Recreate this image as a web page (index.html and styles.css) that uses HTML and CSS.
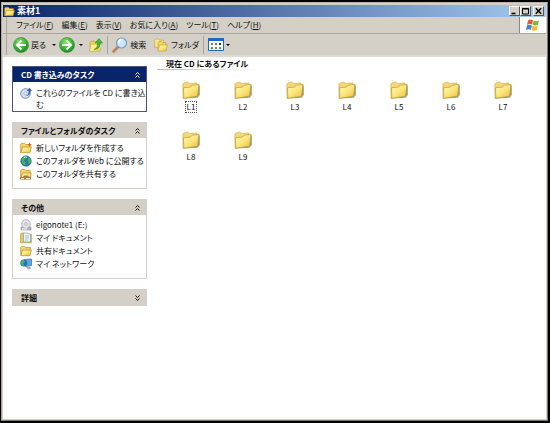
FILE: index.html
```
<!DOCTYPE html>
<html lang="ja">
<head>
<meta charset="utf-8">
<title>素材1</title>
<link rel="stylesheet" href="styles.css">
</head>
<body>
<svg class="defs" aria-hidden="true">
  <defs>
    <linearGradient id="gold" x1="0" y1="0" x2="1" y2="1"><stop offset="0" stop-color="#fffbc0"/><stop offset=".5" stop-color="#fbe67c"/><stop offset="1" stop-color="#e9bd3c"/></linearGradient>
    <radialGradient id="green" cx=".4" cy=".3" r=".75"><stop offset="0" stop-color="#8be06a"/><stop offset=".55" stop-color="#3bb536"/><stop offset="1" stop-color="#1c8420"/></radialGradient>
    <symbol id="folder" viewBox="0 0 18 19">
      <path d="M2 17.500L15.500 16.800 17.800 14V5L17 3.500z" fill="#8b8560" opacity=".8"/>
      <path d="M.8 3.500Q1 2.300 2.200 2l3.300-1 2 1.400 7.500-.4v3L2.500 17.500H1z" fill="#f3d873" stroke="#cfab45" stroke-width=".6"/>
      <path d="M1.500 6.800l7-.8 1.800-1.900 6.700-.6-1.400 11.800L1.800 17.200z" fill="url(#gold)" stroke="#b99836" stroke-width=".7"/>
    </symbol>
    <symbol id="small-folder" viewBox="0 0 12 12">
      <path d="M.7 10.500V2.300l1-.9h3l1.100 1.200h4.500v3" fill="#f4d568" stroke="#b58b23" stroke-width=".7"/>
      <path d="M.8 10.700L2.500 5h8.900l-1.500 5.700z" fill="url(#gold)" stroke="#b58b23" stroke-width=".7"/>
    </symbol>
    <symbol id="chevrons" viewBox="0 0 7 8">
      <path d="M1.500 3.500l2-2 2 2M1.500 6.500l2-2 2 2" fill="none" stroke="currentColor" stroke-width="1"/>
    </symbol>
  </defs>
</svg>
<div class="window">
  <header class="titlebar">
    <svg class="title-icon" viewBox="0 0 12 12"><use href="#small-folder"/></svg>
    <h1>素材1</h1>
    <div class="controls">
      <button aria-label="最小化"><svg viewBox="0 0 9 8"><path d="M1.500 6.500h4" stroke="#000" stroke-width="1.500"/></svg></button>
      <button aria-label="最大化"><svg viewBox="0 0 9 8"><path d="M1.500 1.500h6v5.500h-6zM1.500 2h6" fill="none" stroke="#000"/></svg></button>
      <button class="close" aria-label="閉じる"><svg viewBox="0 0 9 8"><path d="M1.800 1.200l5.400 5.600M7.200 1.200L1.800 6.800" stroke="#000" stroke-width="1.400"/></svg></button>
    </div>
  </header>
  <div class="menurow">
    <nav class="menubar">
      <button>ファイル(<u>F</u>)</button>
      <button>編集(<u>E</u>)</button>
      <button>表示(<u>V</u>)</button>
      <button>お気に入り(<u>A</u>)</button>
      <button>ツール(<u>T</u>)</button>
      <button>ヘルプ(<u>H</u>)</button>
    </nav>
    <div class="brand">
      <svg viewBox="0 0 14 12"><path d="M2 1.500Q4-.2 7 1.200L6.100 5.500Q3.500 4.500 1 5.800z" fill="#e8592b"/><path d="M7.600 1.500q2.400 1.500 5.400 0L12 5.800q-2.500 1.400-5.300 0z" fill="#79b83f"/><path d="M.9 6.500q2.500-1.500 5 0l-1 4.300q-2.300-1.300-4.900.1z" fill="#3f81d4"/><path d="M6.500 6.600q2.500 1.500 5.300.2l-1 4.200q-2.500 1.300-5.200-.1z" fill="#f5bd29"/></svg>
    </div>
  </div>
  <div class="toolbar">
    <button class="back"><svg class="round" viewBox="0 0 16 16"><circle cx="8" cy="8" r="7.500" fill="url(#green)" stroke="#278c29" stroke-width=".6"/><path d="M8.500 3.500L4 8l4.500 4.500M4.500 8H13" fill="none" stroke="#fff" stroke-width="2"/></svg>戻る<i class="caret"></i></button>
    <button class="forward" aria-label="進む"><svg class="round" viewBox="0 0 16 16"><circle cx="8" cy="8" r="7.500" fill="url(#green)" stroke="#278c29" stroke-width=".6"/><path d="M7.500 3.500L12 8l-4.500 4.500M11.500 8H3" fill="none" stroke="#fff" stroke-width="2"/></svg><i class="caret"></i></button>
    <button class="up" aria-label="上へ"><svg class="tool" viewBox="0 0 14 14"><path d="M1 4l1-1h3l1 1h5l1 2-1 7-10 .5z" fill="#efcd58" stroke="#b89230" stroke-width=".6"/><path d="M2.500 7h9.800l-1.500 6L1 13.600z" fill="url(#gold)"/><path d="M5 11.500Q9 10 8.500 5H6L10 .6 13.500 5H11q.5 6-6 6.500z" fill="#41b83a" stroke="#268522" stroke-width=".5"/></svg></button>
    <span class="divider"></span>
    <button class="search"><svg class="lens" viewBox="0 0 16 16"><path d="M1.500 14.500l5-5" stroke="#bd8257" stroke-width="2.600" stroke-linecap="round"/><circle cx="9.500" cy="6" r="5" fill="#c8e8fb" stroke="#7d9bc3" stroke-width="1.200"/><path d="M6.500 6q.2-3 3-3.200" fill="none" stroke="#fff" stroke-width="1.500"/></svg>検索</button>
    <button class="folders"><svg class="tool" viewBox="0 0 14 14"><path d="M.7 9.500V2l1-1h3l1 1.200h3.800V9z" fill="#f8e795" stroke="#c29d34" stroke-width=".6"/><path d="M4 12.500V4.500l1-1h2.500l1 1.200H12v3" fill="#f5d663" stroke="#bf962e" stroke-width=".6"/><path d="M4 13l1.700-6h7.800L12 13z" fill="url(#gold)" stroke="#c29d34" stroke-width=".6"/></svg>フォルダ</button>
    <span class="divider"></span>
    <button class="views" aria-label="表示"><svg class="view-icon" viewBox="0 0 16 13"><path d="M.5.500h15v12H.5z" fill="#fff" stroke="#1e69bf"/><path d="M0 0h16v3H0z" fill="#1e69bf"/><path d="M3 5h2v2H3zM11 9h2v2h-2z" fill="#4b88c7"/><path d="M7 5h2v2H7zM3 9h2v2H3z" fill="#42984b"/><path d="M11 5h2v2h-2z" fill="#222f76"/><path d="M7 9h2v2H7z" fill="#bd6b38"/></svg><i class="caret"></i></button>
  </div>
  <div class="content">
    <aside class="sidebar">
      <section class="panel primary">
        <h2>CD 書き込みのタスク<svg class="chev" viewBox="0 0 7 8"><use href="#chevrons"/></svg></h2>
        <ul>
          <li><svg viewBox="0 0 12 12"><circle cx="5.500" cy="6.500" r="4.800" fill="#d5e0f2" stroke="#788bb5"/><circle cx="5.500" cy="6.500" r="1.500" fill="#fff" stroke="#788bb5" stroke-width=".6"/><path d="M5 9q4-.5 3.600-5H6.700L9.500.8 12 4h-1.500q0 5-5.500 5z" fill="#3561ae"/></svg><a href="#">これらのファイルを CD に書き込<br>む</a></li>
        </ul>
      </section>
      <section class="panel">
        <h2>ファイルとフォルダのタスク<svg class="chev" viewBox="0 0 7 8"><use href="#chevrons"/></svg></h2>
        <ul>
          <li><svg viewBox="0 0 12 12"><use href="#small-folder"/><path d="M9.500.3l.6 1.700 1.700.5-1.700.7-.6 1.600-.7-1.600-1.600-.7 1.600-.5z" fill="#e4572c"/></svg><a href="#">新しいフォルダを作成する</a></li>
          <li><svg viewBox="0 0 12 12"><circle cx="6" cy="6" r="5.300" fill="#2874c4" stroke="#315c82" stroke-width=".5"/><path d="M1.500 4Q3 1 6 1l1 2-2 1-1 2 2 1.500-1 3Q1.500 9 1.500 4zM8.500 2q2.500 1.500 2.300 4.500L9 9 7.500 6z" fill="#42b94b"/><path d="M4 2.500q2-1.500 3 0" stroke="#c9eeee" fill="none"/></svg><a href="#">このフォルダを Web に公開する</a></li>
          <li><svg viewBox="0 0 12 12"><use href="#small-folder"/><path d="M0 9h3l1-1.500h4L9 9h2v2.500H0z" fill="#a87946"/><path d="M1 10.500h3M6 10.500h4" stroke="#fff1ca"/></svg><a href="#">このフォルダを共有する</a></li>
        </ul>
      </section>
      <section class="panel">
        <h2>その他<svg class="chev" viewBox="0 0 7 8"><use href="#chevrons"/></svg></h2>
        <ul>
          <li><svg viewBox="0 0 12 12"><path d="M1 8h10v3H1z" fill="#b6b8bd" stroke="#7c8089" stroke-width=".5"/><circle cx="6" cy="5" r="4.300" fill="#e4e6eb" stroke="#989da8" stroke-width=".7"/><circle cx="6" cy="5" r="1.300" fill="#fff" stroke="#888d98" stroke-width=".6"/><path d="M2 10h5" stroke="#fff"/></svg><a href="#">eigonote1 (E:)</a></li>
          <li><svg viewBox="0 0 12 12"><path d="M.6 10.800V2l1-1h3l1 1.200h5.800v8.600z" fill="#efc84e" stroke="#b58b23" stroke-width=".6"/><path d="M3.500 1h5L10.500 3v7h-7z" fill="#e9f4ff" stroke="#6b93bd" stroke-width=".6"/><path d="M5 4h4M5 6h4M5 8h3" stroke="#82abd6" stroke-width=".7"/></svg><a href="#">マイ ドキュメント</a></li>
          <li><svg viewBox="0 0 12 12"><use href="#small-folder"/></svg><a href="#">共有ドキュメント</a></li>
          <li><svg viewBox="0 0 12 12"><path d="M4.500 1.500l7-.5v6.500l-6 1z" fill="#55a9e6" stroke="#55677f" stroke-width=".7"/><path d="M6 9l4-.7 1 2.500-3 .7z" fill="#a6adb6"/><circle cx="3.800" cy="5" r="3.500" fill="#246fc1"/><path d="M1 4q1-2 3-2l1 2-2 1 1 2-1 1Q.8 7 1 4z" fill="#53b953"/></svg><a href="#">マイ ネットワーク</a></li>
        </ul>
      </section>
      <section class="panel">
        <h2>詳細<svg class="chev down" viewBox="0 0 7 8"><use href="#chevrons"/></svg></h2>
      </section>
    </aside>
    <main>
      <h2 class="group">現在 CD にあるファイル</h2>
      <ul class="files">
        <li><svg viewBox="0 0 18 19"><use href="#folder"/></svg><span class="focused">L1</span></li>
        <li><svg viewBox="0 0 18 19"><use href="#folder"/></svg><span>L2</span></li>
        <li><svg viewBox="0 0 18 19"><use href="#folder"/></svg><span>L3</span></li>
        <li><svg viewBox="0 0 18 19"><use href="#folder"/></svg><span>L4</span></li>
        <li><svg viewBox="0 0 18 19"><use href="#folder"/></svg><span>L5</span></li>
        <li><svg viewBox="0 0 18 19"><use href="#folder"/></svg><span>L6</span></li>
        <li><svg viewBox="0 0 18 19"><use href="#folder"/></svg><span>L7</span></li>
        <li><svg viewBox="0 0 18 19"><use href="#folder"/></svg><span>L8</span></li>
        <li><svg viewBox="0 0 18 19"><use href="#folder"/></svg><span>L9</span></li>
      </ul>
    </main>
  </div>
</div>
</body>
</html>
```
FILE: styles.css
```
* { box-sizing: border-box; }
body {
  margin: 0;
  height: 100vh;
  padding: 2px 2px 2px 1px;
  background: #000;
  color: #111;
  font: 8px/12px "Noto Sans CJK JP", sans-serif;
  font-feature-settings: "palt";
}
.defs { position: absolute; width: 0; height: 0; }
svg { display: block; flex: none; }
h1, h2, ul { margin: 0; padding: 0; font-size: inherit; }
ul { list-style: none; }
a { color: inherit; text-decoration: none; }
button { font: inherit; font-feature-settings: inherit; color: inherit; border: 0; padding: 0; background: none; display: flex; align-items: center; white-space: nowrap; }
.window {
  height: 100%;
  display: flex;
  flex-direction: column;
  padding: 2px 1px 1px;
  background: #d4d0c8;
  border: 1px solid;
  border-color: #b9b6b0 #77746f #77746f #aaa7a2;
}
.titlebar {
  display: flex;
  align-items: center;
  height: 12px;
  padding: 0 2px 0 1px;
  color: #fff;
  background: linear-gradient(90deg, #0a246a, #a6caf0);
}
.title-icon { width: 11px; height: 11px; }
.titlebar h1 { margin-left: 2px; font-size: 9px; }
.controls { display: flex; margin-left: auto; }
.controls button { width: 11px; height: 10px; justify-content: center; background: #d4d0c8; border: 1px solid; border-color: #fff #555 #555 #fff; }
.controls svg { width: 9px; height: 8px; }
.controls .close { margin-left: 2px; }
.menurow { display: flex; height: 17px; border-bottom: 1px solid #aaa69e; }
.menubar { flex: 1; display: flex; align-items: center; gap: 8px; margin-left: 3px; padding-left: 9px; border-left: 1px solid #aaa69e; }
.menubar u { text-underline-offset: 1px; }
.menubar button { display: block; }
.brand { width: 27px; display: grid; place-items: center; background: #fff; border-left: 1px solid #888; }
.brand svg { width: 14px; height: 12px; }
.toolbar { display: flex; align-items: center; height: 21px; margin-left: 3px; padding-left: 6px; border-left: 1px solid #aaa69e; }
.round { width: 16px; height: 16px; }
.tool { width: 14px; height: 14px; }
.lens { width: 16px; height: 16px; }
.view-icon { width: 16px; height: 13px; }
.back { gap: 2px; }
.caret { border: 2px solid transparent; border-top-color: #000; border-bottom: 0; margin-left: 4px; }
.forward { margin-left: 3px; }
.up { margin-left: 6px; }
.divider { width: 1px; height: 18px; margin: 0 4px; background: #aaa69e; }
.search { gap: 2px; }
.folders { gap: 3px; margin-left: 8px; }
.views .caret { margin-left: 2px; }
.content { flex: 1; min-height: 0; display: flex; background: #fff; border-top: 2px solid #dedbd5; }
.sidebar { width: 144px; padding: 9px 0 0 9px; display: flex; flex-direction: column; gap: 10px; }
.panel { border: 1px solid #d4d0c8; }
.panel h2 { display: flex; align-items: center; height: 15px; padding: 0 5px 0 8px; background: #d4d0c8; }
.chev { width: 7px; height: 8px; margin-left: auto; }
.down { transform: rotate(180deg); }
.panel ul { padding: 4px 0 7px 7px; }
.panel li { display: flex; gap: 4px; min-height: 13px; align-items: flex-start; white-space: nowrap; }
.panel li svg { width: 12px; height: 12px; }
.primary { border-color: #4c5584; }
.primary h2 { background: #0a246a; color: #fff; }
.primary ul { padding: 5px 0 0 7px; }
.primary a { line-height: 12px; }
main { flex: 1; min-width: 0; padding: 1px 0 0 10px; }
.group { padding-left: 9px; border-bottom: 1px solid; border-image: linear-gradient(90deg, #b9b9b9, #fff 100px) 1; line-height: 11px; }
.files { display: grid; grid-template-columns: repeat(auto-fill, 52px); grid-auto-rows: 50px; padding: 11px 0 0 8px; }
.files li { display: flex; flex-direction: column; align-items: center; }
.files svg { width: 18px; height: 19px; }
.files span { margin-top: 1px; padding: 0 1px; line-height: 10px; border: 1px solid transparent; }
.files .focused { border: 1px dotted #555; }
```
